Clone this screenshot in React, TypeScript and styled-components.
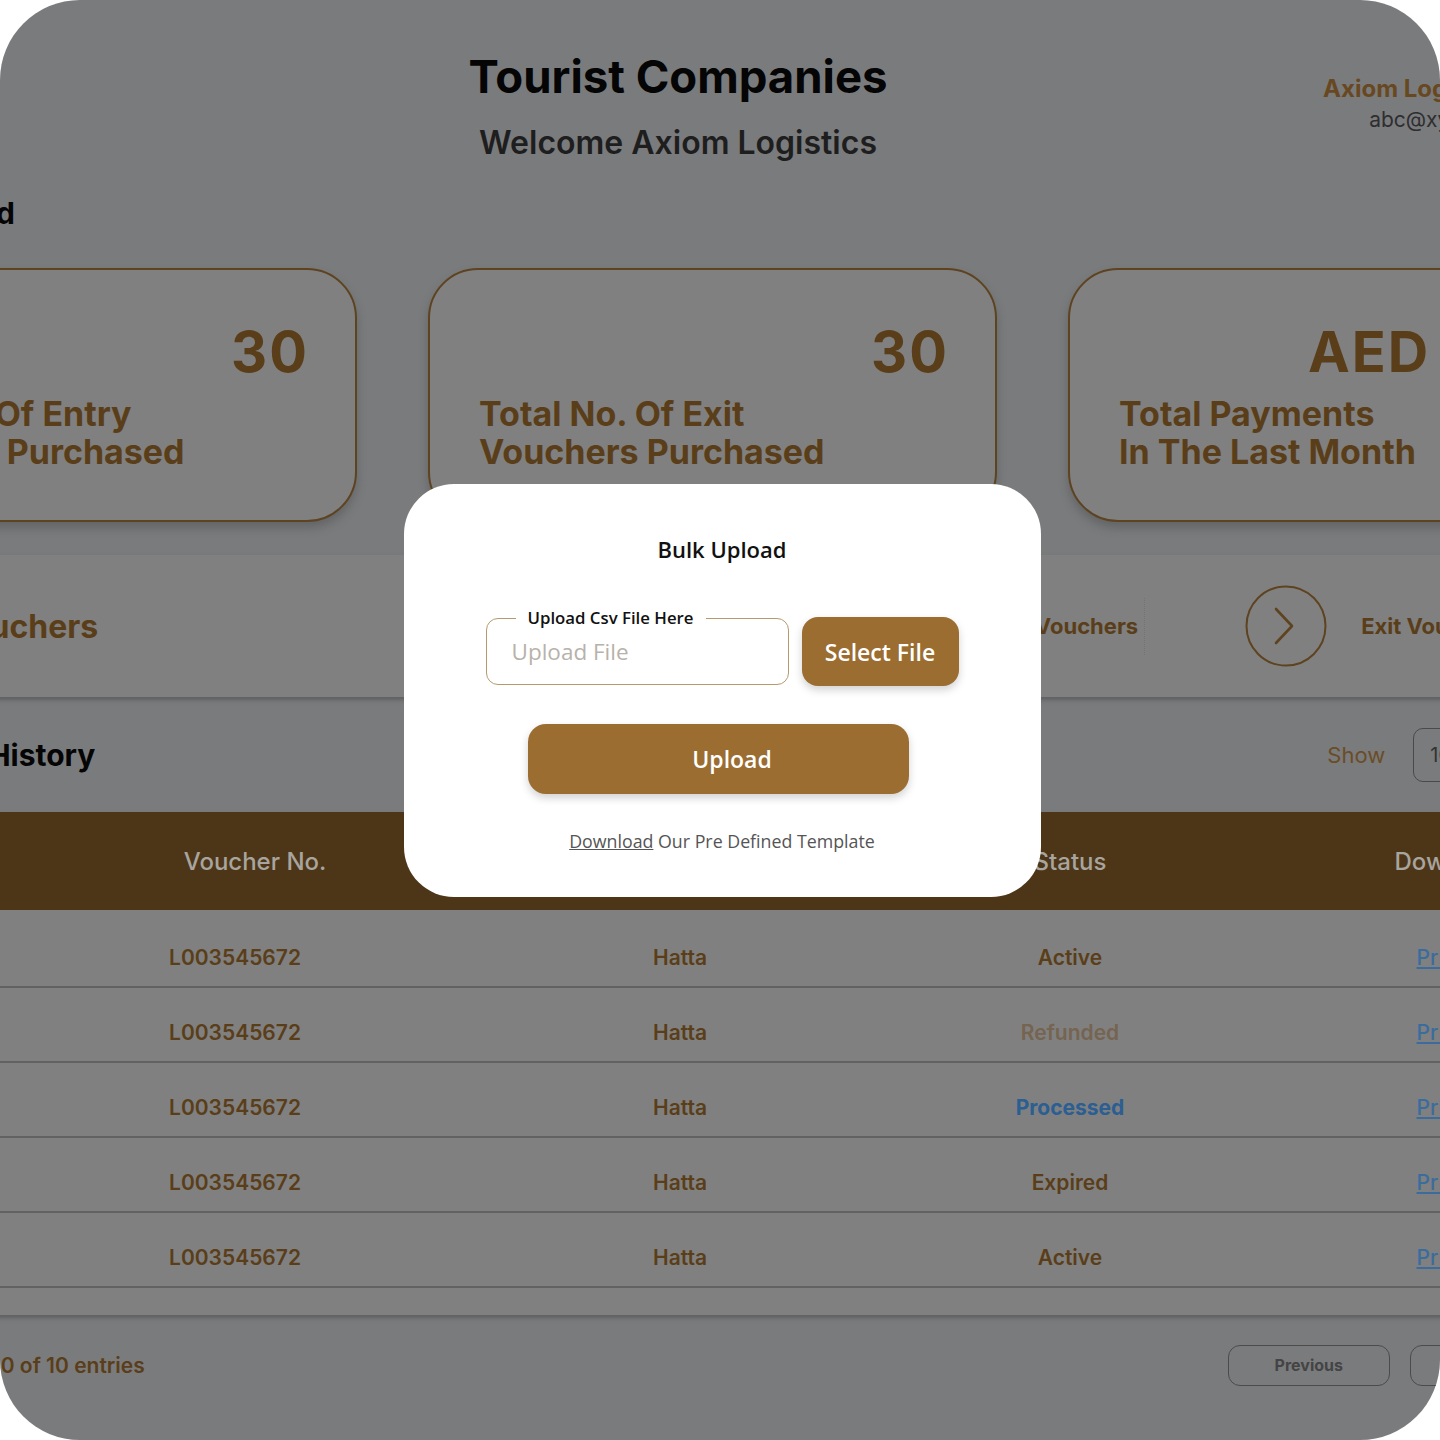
import styled, { createGlobalStyle } from 'styled-components';

const GlobalStyle = createGlobalStyle`
  html, body {
    margin: 0;
    padding: 0;
    background: #ffffff;
  }
  * {
    box-sizing: border-box;
  }
`;

const font = `Inter, "Noto Sans", "DejaVu Sans", sans-serif`;
const modalFont = `"Open Sans", "Noto Sans", sans-serif`;

type Voucher = {
  no: string;
  point: string;
  status: 'Active' | 'Refunded' | 'Processed' | 'Expired';
};

const vouchers: Voucher[] = [
  { no: 'L003545672', point: 'Hatta', status: 'Active' },
  { no: 'L003545672', point: 'Hatta', status: 'Refunded' },
  { no: 'L003545672', point: 'Hatta', status: 'Processed' },
  { no: 'L003545672', point: 'Hatta', status: 'Expired' },
  { no: 'L003545672', point: 'Hatta', status: 'Active' },
];

const stats = [
  { value: '30', label: ['Total No. Of Entry', 'Vouchers Purchased'] },
  { value: '30', label: ['Total No. Of Exit', 'Vouchers Purchased'] },
  { value: 'AED 1500', label: ['Total Payments', 'In The Last Month'] },
];

export default function App() {
  return (
    <>
      <GlobalStyle />
      <Frame>
        <Page>
          <Header>
            <TitleBlock>
              <Title>Tourist Companies</Title>
              <Welcome>Welcome Axiom Logistics</Welcome>
            </TitleBlock>
            <UserBlock>
              <UserName>Axiom Logistics</UserName>
              <UserMail>abc@xyz.com</UserMail>
            </UserBlock>
          </Header>

          <PageTitle>Dashboard</PageTitle>

          <Cards>
            {stats.map((s) => (
              <StatCard key={s.label[0]}>
                <StatValue>{s.value}</StatValue>
                <StatLabel>
                  {s.label[0]}
                  <br />
                  {s.label[1]}
                </StatLabel>
              </StatCard>
            ))}
          </Cards>

          <Band>
            <BandTitle>Buy Vouchers</BandTitle>
            <VoucherNav>
              <NavItem>
                <ChevronCircle />
                <NavLabel>Entry Vouchers</NavLabel>
              </NavItem>
              <NavDivider />
              <NavItem>
                <ChevronCircle />
                <NavLabel>Exit Vouchers</NavLabel>
              </NavItem>
            </VoucherNav>
          </Band>

          <HistoryBar>
            <HistoryTitle>Voucher History</HistoryTitle>
            <ShowControl>
              <ShowLabel>Show</ShowLabel>
              <ShowSelect>10</ShowSelect>
            </ShowControl>
          </HistoryBar>

          <Table>
            <HeadRow>
              <HeadCell>S.No.</HeadCell>
              <HeadCell $shift={40}>Voucher No.</HeadCell>
              <HeadCell>Border Point</HeadCell>
              <HeadCell>Status</HeadCell>
              <HeadCell $shift={24}>Download</HeadCell>
            </HeadRow>
            {vouchers.map((v, i) => (
              <BodyRow key={i}>
                <Cell>{i + 1}</Cell>
                <Cell>{v.no}</Cell>
                <Cell>{v.point}</Cell>
                <StatusCell $status={v.status}>{v.status}</StatusCell>
                <Cell>
                  <PrintLink href="#">Print</PrintLink>
                </Cell>
              </BodyRow>
            ))}
            <TableEnd />
          </Table>

          <Footer>
            <Entries>Showing 1 to 10 of 10 entries</Entries>
            <Pager>
              <PageButton>Previous</PageButton>
              <PageButton>Next</PageButton>
            </Pager>
          </Footer>
        </Page>

        <Backdrop>
          <Modal>
            <ModalTitle>Bulk Upload</ModalTitle>
            <FileRow>
              <FileField>
                <FieldLabel>Upload Csv File Here</FieldLabel>
                <FileInput placeholder="Upload File" readOnly />
              </FileField>
              <SelectButton>Select File</SelectButton>
            </FileRow>
            <UploadButton>Upload</UploadButton>
            <TemplateNote>
              <u>Download</u> Our Pre Defined Template
            </TemplateNote>
          </Modal>
        </Backdrop>
      </Frame>
    </>
  );
}

function ChevronCircle() {
  return (
    <svg width="82" height="82" viewBox="0 0 82 82" fill="none">
      <circle cx="41" cy="41" r="39.5" stroke="#5e4320" strokeWidth="2" />
      <path
        d="M31 24 L47 41 L31 58"
        stroke="#5e4320"
        strokeWidth="2.6"
        strokeLinecap="round"
        strokeLinejoin="round"
      />
    </svg>
  );
}

const Frame = styled.div`
  position: relative;
  width: 1440px;
  height: 1440px;
  border-radius: 80px;
  overflow: hidden;
  background: #7a7b7d;
  font-family: ${font};
`;

const Page = styled.div`
  width: 2000px;
  margin-left: -230px;
`;

const Header = styled.header`
  display: flex;
  align-items: flex-start;
  height: 190px;
  padding-top: 50px;
`;

const TitleBlock = styled.div`
  width: 600px;
  margin-left: 608px;
  text-align: center;
`;

const Title = styled.h1`
  margin: 0;
  font-size: 45.5px;
  line-height: 54px;
  font-weight: 700;
  color: #050505;
`;

const Welcome = styled.h2`
  margin: 20px 0 0;
  font-size: 32px;
  line-height: 38px;
  font-weight: 600;
  color: #1e1e1e;
`;

const UserBlock = styled.div`
  margin-left: auto;
  padding-right: 260px;
  padding-top: 24px;
  text-align: right;
`;

const UserName = styled.div`
  font-size: 24px;
  line-height: 30px;
  font-weight: 700;
  color: #684820;
`;

const UserMail = styled.div`
  font-size: 21px;
  line-height: 32px;
  color: #2e2e30;
`;

const PageTitle = styled.div`
  height: 78px;
  padding-left: 85px;
  font-size: 30px;
  line-height: 46px;
  font-weight: 700;
  color: #050505;
`;

const Cards = styled.section`
  display: flex;
  gap: 71px;
  padding-left: 18px;
`;

const StatCard = styled.div`
  flex: 0 0 569px;
  height: 254px;
  padding: 52px 46px 0 49px;
  border: 2px solid #5e4320;
  border-radius: 50px;
  background: #808080;
  box-shadow: 0 6px 10px rgba(60, 60, 60, 0.35);
  display: flex;
  flex-direction: column;
`;

const StatValue = styled.div`
  align-self: flex-end;
  font-size: 56px;
  line-height: 60px;
  font-weight: 700;
  letter-spacing: 2px;
  color: #5a3e19;
  white-space: nowrap;
`;

const StatLabel = styled.div`
  margin-top: 13px;
  font-size: 34px;
  line-height: 38px;
  font-weight: 700;
  color: #5a3e19;
  white-space: nowrap;
`;

const Band = styled.section`
  display: flex;
  align-items: center;
  height: 142px;
  margin-top: 33px;
  background: #808080;
  box-shadow: 0 3px 4px rgba(70, 70, 70, 0.5);
`;

const BandTitle = styled.div`
  width: 780px;
  padding-left: 110px;
  font-size: 32px;
  font-weight: 700;
  color: #5a3e19;
`;

const VoucherNav = styled.nav`
  display: flex;
  align-items: center;
  margin-left: 306px;
`;

const NavItem = styled.div`
  display: flex;
  align-items: center;
  gap: 34px;
`;

const NavLabel = styled.span`
  font-size: 22px;
  font-weight: 700;
  color: #5a3e19;
  white-space: nowrap;
`;

const NavDivider = styled.span`
  width: 0;
  height: 57px;
  margin: 0 100px 0 6px;
  border-left: 1px dotted #747474;
`;

const HistoryBar = styled.div`
  display: flex;
  align-items: center;
  height: 115px;
  padding-left: 87px;
`;

const HistoryTitle = styled.div`
  font-size: 30px;
  font-weight: 700;
  color: #050505;
`;

const ShowControl = styled.div`
  display: flex;
  align-items: center;
  gap: 28px;
  margin-left: 1232px;
`;

const ShowLabel = styled.span`
  font-size: 22px;
  color: #6a4d27;
`;

const ShowSelect = styled.div`
  width: 90px;
  height: 54px;
  border: 1px solid #4a4a4a;
  border-radius: 10px;
  font-size: 20px;
  line-height: 52px;
  padding-left: 16px;
  color: #333;
`;

const columns = `250px 430px 460px 320px 420px`;

const Table = styled.div`
  background: #808080;
  box-shadow: 0 3px 4px rgba(70, 70, 70, 0.5);
`;

const HeadRow = styled.div`
  display: grid;
  grid-template-columns: ${columns};
  align-items: center;
  height: 98px;
  background: #4d3618;
`;

const HeadCell = styled.div<{ $shift?: number }>`
  padding-left: ${(p) => p.$shift ?? 0}px;
  text-align: center;
  font-size: 24px;
  font-weight: 500;
  color: #a8a49e;
`;

const BodyRow = styled.div`
  display: grid;
  grid-template-columns: ${columns};
  align-items: end;
  height: 75px;
  padding-bottom: 13px;
  border-bottom: 2px solid #626262;
  &:nth-of-type(2) {
    height: 78px;
  }
`;

const Cell = styled.div`
  text-align: center;
  font-size: 21px;
  line-height: 30px;
  font-weight: 600;
  color: #5a3e19;
`;

const statusColors: Record<Voucher['status'], string> = {
  Active: '#5a3e19',
  Refunded: '#756450',
  Processed: '#2b5e92',
  Expired: '#5a3e19',
};

const StatusCell = styled(Cell)<{ $status: Voucher['status'] }>`
  color: ${(p) => statusColors[p.$status]};
  font-weight: ${(p) => (p.$status === 'Processed' ? 700 : 600)};
`;

const PrintLink = styled.a`
  color: #3a6c9e;
  font-weight: 500;
  text-decoration: underline;
`;

const TableEnd = styled.div`
  height: 27px;
`;

const Footer = styled.div`
  display: flex;
  align-items: center;
  height: 100px;
  padding-left: 89px;
`;

const Entries = styled.div`
  font-size: 21px;
  font-weight: 600;
  color: #5a3e19;
`;

const Pager = styled.div`
  display: flex;
  gap: 20px;
  margin-left: 1083px;
`;

const PageButton = styled.button`
  width: 162px;
  height: 41px;
  border: 1.5px solid #4b4b4b;
  border-radius: 12px;
  background: transparent;
  font-family: ${font};
  font-size: 16px;
  font-weight: 700;
  color: #444;
`;

const Backdrop = styled.div`
  position: absolute;
  inset: 0;
  display: flex;
  justify-content: center;
  align-items: flex-start;
  padding: 484px 0 0 4px;
`;

const Modal = styled.div`
  width: 637px;
  height: 413px;
  padding-top: 50px;
  border-radius: 50px;
  background: #ffffff;
  display: flex;
  flex-direction: column;
  align-items: center;
  font-family: ${modalFont};
`;

const ModalTitle = styled.div`
  font-size: 22px;
  line-height: 30px;
  font-weight: 600;
  color: #111;
`;

const FileRow = styled.div`
  display: flex;
  align-items: center;
  gap: 13px;
  margin-top: 53px;
`;

const FileField = styled.div`
  position: relative;
  width: 303px;
  height: 67px;
  border: 1px solid #b59a6e;
  border-radius: 12px;
`;

const FieldLabel = styled.span`
  position: absolute;
  top: -11px;
  left: 29px;
  padding: 0 12px;
  background: #ffffff;
  font-size: 16.8px;
  line-height: 20px;
  font-weight: 600;
  color: #111;
`;

const FileInput = styled.input`
  width: 100%;
  height: 100%;
  padding: 0 0 0 25px;
  border: none;
  background: transparent;
  font-family: ${modalFont};
  font-size: 22.5px;
  font-weight: 500;
  outline: none;
  &::placeholder {
    color: #b7b2aa;
  }
`;

const BrownButton = styled.button`
  border: none;
  background: #9b6d30;
  color: #ffffff;
  font-family: ${modalFont};
  font-size: 23px;
  font-weight: 600;
  box-shadow: 0 4px 8px rgba(0, 0, 0, 0.18);
`;

const SelectButton = styled(BrownButton)`
  width: 157px;
  height: 69px;
  border-radius: 16px;
`;

const UploadButton = styled(BrownButton)`
  width: 381px;
  height: 70px;
  margin-top: 38px;
  margin-right: 8px;
  padding-left: 34px;
  border-radius: 18px;
`;

const TemplateNote = styled.div`
  margin-top: 36px;
  font-size: 17.8px;
  line-height: 22px;
  font-weight: 500;
  color: #555;
`;
